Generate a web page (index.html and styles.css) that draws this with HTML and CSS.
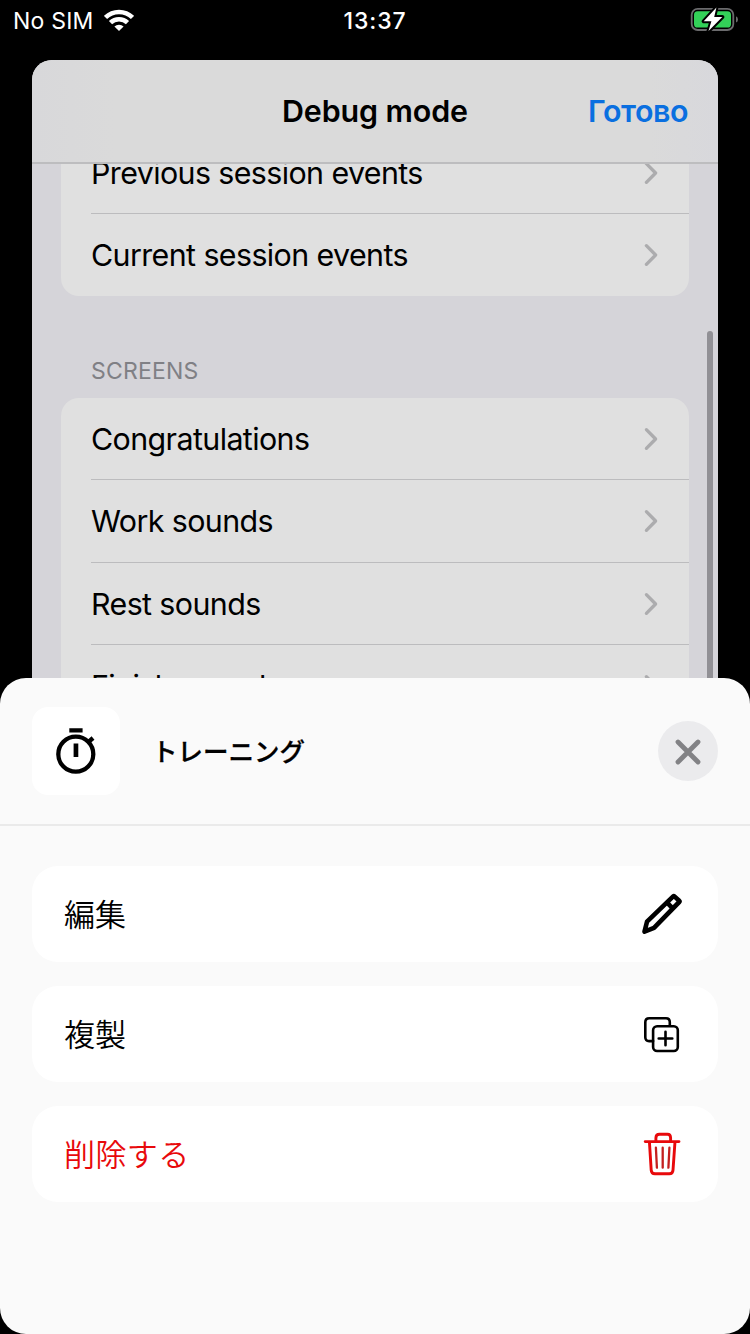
FILE: index.html
```html
<!DOCTYPE html>
<html lang="ja">
<head>
<meta charset="utf-8">
<title>Debug mode</title>
<link rel="stylesheet" href="styles.css">
</head>
<body>
<svg class="symbols" width="0" height="0" aria-hidden="true">
  <symbol id="chevron" viewBox="0 0 16 24"><path d="M3.4 2.7 L12.6 12 L3.4 21.3" fill="none" stroke="currentColor" stroke-width="3.3" stroke-linecap="round" stroke-linejoin="round"/></symbol>
</svg>
<header class="status">
  <div class="carrier"><span class="carrier-name">No SIM</span>
    <svg class="wifi" width="30" height="22" viewBox="0 0 30 22"><g fill="none" stroke="#fff" stroke-width="4.5"><path d="M1.5 8.5 A19.2 19.2 0 0 1 28.5 8.5"/><path d="M6.5 13.7 A12 12 0 0 1 23.5 13.7"/></g><path d="M10.4 17.6 A6.8 6.8 0 0 1 19.6 17.6 L15 22 Z" fill="#fff"/></svg>
  </div>
  <span class="clock">13:37</span>
  <svg class="battery" width="50" height="26" viewBox="0 0 50 26"><rect x="2.7" y="1.8" width="41.6" height="21.2" rx="6" fill="none" stroke="#6b6b6d" stroke-width="1.8"/><path d="M47 9.2 Q49 10 49 12.4 Q49 14.8 47 15.6 Z" fill="#6b6b6d"/><rect x="5" y="4.2" width="37" height="16.4" rx="3.6" fill="#33d158"/><path d="M27.4 .5 L14.7 14.3 H22.4 L19.5 24 L33.3 10 H25.2 Z" fill="#fff" stroke="#000" stroke-width="4" stroke-linejoin="round" paint-order="stroke"/></svg>
</header>

<main class="page">
  <div class="navbar"><h1 class="nav-title">Debug mode</h1><a class="nav-done">Готово</a></div>
  <div class="scroll">
    <section class="group group-top">
      <div class="row row-cut"><span class="label">Previous session events</span><svg class="chev"><use href="#chevron"/></svg></div>
      <div class="row"><span class="label">Current session events</span><svg class="chev"><use href="#chevron"/></svg></div>
    </section>
    <h2 class="section-title">SCREENS</h2>
    <section class="group group-screens">
      <div class="row"><span class="label">Congratulations</span><svg class="chev"><use href="#chevron"/></svg></div>
      <div class="row"><span class="label">Work sounds</span><svg class="chev"><use href="#chevron"/></svg></div>
      <div class="row"><span class="label">Rest sounds</span><svg class="chev"><use href="#chevron"/></svg></div>
      <div class="row"><span class="label">Finish sounds</span><svg class="chev"><use href="#chevron"/></svg></div>
    </section>
    <div class="scrollbar"></div>
  </div>
</main>

<section class="sheet">
  <div class="sheet-head">
    <div class="tile"><svg width="88" height="88" viewBox="0 0 88 88"><circle cx="43.8" cy="47.2" r="17.5" fill="none" stroke="#000" stroke-width="4.3"/><path d="M37.3 21.3h13.3v4.3H37.3zM41.6 36.6h4.7v13.3h-4.7z"/><path d="M56 35.3 L61 31" stroke="#000" stroke-width="4.4"/></svg></div>
    <h2 class="sheet-title">トレーニング</h2>
    <button class="close" aria-label="Close"><svg width="60" height="60" viewBox="0 0 60 60"><path d="M20 21 L40 41 M40 21 L20 41" stroke="#828285" stroke-width="4.8" stroke-linecap="round"/></svg></button>
  </div>
  <div class="actions">
    <div class="action"><span>編集</span>
      <svg width="48" height="48" viewBox="0 0 48 48" fill="none" stroke="#000" stroke-width="4.6" stroke-linejoin="round"><path d="M6.5 41.6 L9 31.7 L35.2 6.4 Q35.8 5.8 36.4 6.4 L41.2 10.8 Q41.8 11.4 41.2 12 L16 37.8 Z"/><path d="M28.6 12.2 L35.2 18.8"/></svg></div>
    <div class="action"><span>複製</span>
      <svg width="48" height="48" viewBox="-3 0 48 48" fill="none" stroke="#000" stroke-width="2.6" stroke-linecap="round" stroke-linejoin="round"><path d="M12.1 31.1H8.1Q4.3 31.1 4.3 27.2V12.3Q4.3 8.3 8.3 8.3H25Q28.8 8.3 28.8 12.2V15.8"/><rect x="12.1" y="16.2" width="24.7" height="24.8" rx="4"/><path d="M17.7 28.5H31.3M24.5 21.7V35.3"/></svg></div>
    <div class="action danger"><span>削除する</span>
      <svg width="48" height="48" viewBox="-3 0 48 48" fill="none" stroke="#e8090b" stroke-width="2.9" stroke-linecap="round" stroke-linejoin="round"><path d="M4.2 11.6H38M8.4 11.6L10.2 40.2Q10.4 43.8 13.9 43.8H28.3Q31.8 43.8 32 40.2L34 11.6M14.9 11.3V8Q14.9 4.2 18.5 4.2H26.5Q29.6 4.2 29.6 8V11.3"/><path d="M14.9 17.7L15.9 37.7M21.7 17.7V37.7M28.4 17.7L27.4 37.7" stroke="#c4201f" stroke-width="2.3"/></svg></div>
  </div>
</section>
</body>
</html>
```
FILE: styles.css
```css
* { box-sizing: border-box; }
body { margin: 0; width: 750px; height: 1334px; overflow: hidden; background: #000; color: #000; font-family: Inter, "Noto Sans CJK JP", sans-serif; display: flex; flex-direction: column; }
h1, h2 { margin: 0; }
.symbols { display: none; }
.status { height: 60px; flex: none; padding: 7px 11px 0 13px; display: grid; grid-template-columns: 1fr auto 1fr; align-items: start; color: #fff; font-size: 23px; line-height: 29px; }
.carrier { display: flex; gap: 10px; }
.carrier-name { letter-spacing: .2px; }
.wifi { margin-top: 2px; }
.clock { margin-right: 2px; font-weight: 550; letter-spacing: .9px; }
.battery { justify-self: end; }

.page { width: 686px; height: 618px; flex: none; align-self: center; background: #d5d4d9; border-radius: 20px 20px 0 0; overflow: hidden; }
.navbar { height: 104px; border-bottom: 2px solid #bdbdbf; padding: 0 30px 0 0; background: linear-gradient(90deg, #d8d8da, #dadada 12%, #dadada 90%, #d8d8dc); display: grid; grid-template-columns: 1fr auto 1fr; align-items: center; font-size: 30.4px; line-height: 40px; }
.nav-title { grid-column: 2; margin-left: 30px; font-size: 30.4px; font-weight: 600; letter-spacing: -.1px; }
.nav-done { justify-self: end; font-weight: 600; letter-spacing: -.45px; color: #0a6fe0; }
.scroll { position: relative; height: 514px; overflow: hidden; padding: 0 29px; }
.group { background: #e0e0e0; overflow: hidden; }
.group-top { height: 132px; border-radius: 0 0 18px 18px; }
.group-screens { border-radius: 18px 18px 0 0; }
.row { height: 82.25px; margin-left: 30px; padding: 1px 30px 0 0; border-bottom: 1px solid #bcbcbe; display: flex; align-items: center; justify-content: space-between; font-size: 30.4px; line-height: 40px; }
.row:last-child { padding-top: 2px; border-bottom-color: transparent; }
.row-cut { margin-top: -32.5px; padding-top: 2px; }
.label { white-space: nowrap; letter-spacing: -.6px; }
.chev { width: 16px; height: 24px; color: #acacae; }
.section-title { height: 102px; padding: 61px 0 0 30px; font-size: 23px; line-height: 28px; font-weight: 400; letter-spacing: .2px; color: #808085; }
.scrollbar { position: absolute; top: 167px; right: 5px; width: 6px; height: 400px; border-radius: 3px; background: #919095; }

.sheet { height: 656px; flex: none; background: #fafafa; border-radius: 26px; overflow: hidden; }
.sheet-head { height: 148px; border-bottom: 2px solid #eaeaea; padding: 0 32px; display: flex; align-items: center; }
.tile { width: 88px; height: 88px; border-radius: 16px; background: #fff; }
.tile svg, .close svg, .action svg { display: block; }
.sheet-title { flex: 1; margin-left: 32px; padding-top: 2px; font-size: 25.5px; line-height: 40px; font-weight: 500; -webkit-text-stroke: .3px #000; }
.close { width: 60px; height: 60px; padding: 0; border: 0; border-radius: 50%; background: #ebebed; }
.actions { padding: 40px 32px; display: grid; gap: 24px; }
.action { height: 96px; padding: 0 32px; border-radius: 26px; background: #fff; display: flex; align-items: center; justify-content: space-between; font-family: "Noto Sans CJK JP", sans-serif; font-size: 31px; line-height: 46px; font-weight: 350; }
.action span { margin-top: -2px; }
.danger { color: #e8090b; letter-spacing: .4px; }
```
